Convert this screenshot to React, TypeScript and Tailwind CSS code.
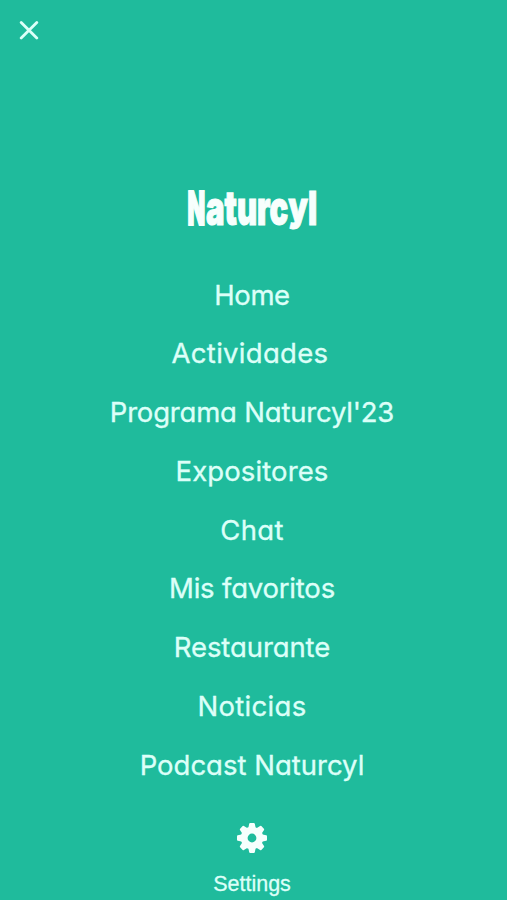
import React from 'react';

interface MenuItem {
  id: string;
  label: string;
  className: string;
}

const menuItems: MenuItem[] = [
  { id: 'home', label: 'Home', className: 'tracking-[-0.4px]' },
  { id: 'activities', label: 'Actividades', className: 'tracking-[0.3px] -ml-1' },
  { id: 'program', label: "Programa Naturcyl'23", className: 'tracking-[-0.2px]' },
  { id: 'exhibitors', label: 'Expositores', className: 'tracking-[0.1px]' },
  { id: 'chat', label: 'Chat', className: 'tracking-[0.3px]' },
  { id: 'favorites', label: 'Mis favoritos', className: 'tracking-[-0.2px]' },
  { id: 'restaurant', label: 'Restaurante', className: 'tracking-[-0.1px]' },
  { id: 'news', label: 'Noticias', className: 'tracking-[0.3px]' },
  { id: 'podcast', label: 'Podcast Naturcyl', className: 'tracking-[0px]' },
];

const CloseIcon: React.FC = () => (
  <svg className="w-5 h-5" viewBox="0 0 20 20" fill="none" stroke="currentColor" strokeWidth="2.8" strokeLinecap="round">
    <path d="M2.2 2.5L17.8 18.1M17.8 2.5L2.2 18.1" />
  </svg>
);

const GearIcon: React.FC = () => (
  <svg className="w-8 h-8" viewBox="-16 -16 32 32" fill="currentColor">
    <circle r="7.8" fill="none" stroke="currentColor" strokeWidth="6.8" />
    {[0, 45, 90, 135, 180, 225, 270, 315].map((angle) => (
      <path key={angle} d="M-3.8 -9.5L-2.8 -14.2Q-2.6 -15 -1.8 -15H1.8Q2.6 -15 2.8 -14.2L3.8 -9.5Z" transform={`rotate(${angle})`} />
    ))}
  </svg>
);

// Condensed wordmark: narrow capital and a short descender
const Wordmark: React.FC = () => (
  <h1 className="h-[60px] leading-[60px] text-[47px] font-black font-[Inter,sans-serif] text-[#f7fffd] scale-x-[0.66] whitespace-nowrap [-webkit-text-stroke:1.2px_currentColor]">
    <span className="inline-block origin-left scale-x-[0.74] -mr-[8px] [-webkit-text-stroke:2px_currentColor]">N</span>
    <span>aturc</span>
    <span className="inline-block origin-[50%_35%] scale-y-[0.86]">y</span>
    <span>l</span>
  </h1>
);

export default function App() {
  return (
    <div className="h-[900px] w-full overflow-hidden flex flex-col bg-[#1fbb9c] text-[#dcfff8]">
      <header className="h-[60px] shrink-0 pl-[19px] pt-[20px]">
        <button className="block" aria-label="Close">
          <CloseIcon />
        </button>
      </header>

      <main className="flex flex-col items-center w-[504px] pt-[118px]">
        <Wordmark />

        <nav className="flex flex-col items-center mt-[27.5px] text-[27.5px] font-[Inter,sans-serif] [font-feature-settings:'cv11'] [-webkit-text-stroke:0.35px_currentColor]">
          {menuItems.map((item) => (
            <a key={item.id} className={`h-[58.75px] leading-[58.75px] whitespace-nowrap ${item.className}`}>
              {item.label}
            </a>
          ))}
        </nav>

        <button className="flex flex-col items-center mt-[27.5px]">
          <span className="text-[#f7fffd]">
            <GearIcon />
          </span>
          <span className="mt-[16px] text-[21.5px] leading-[28px] font-['Liberation_Sans',sans-serif] [-webkit-text-stroke:0.3px_currentColor]">Settings</span>
        </button>
      </main>
    </div>
  );
}
